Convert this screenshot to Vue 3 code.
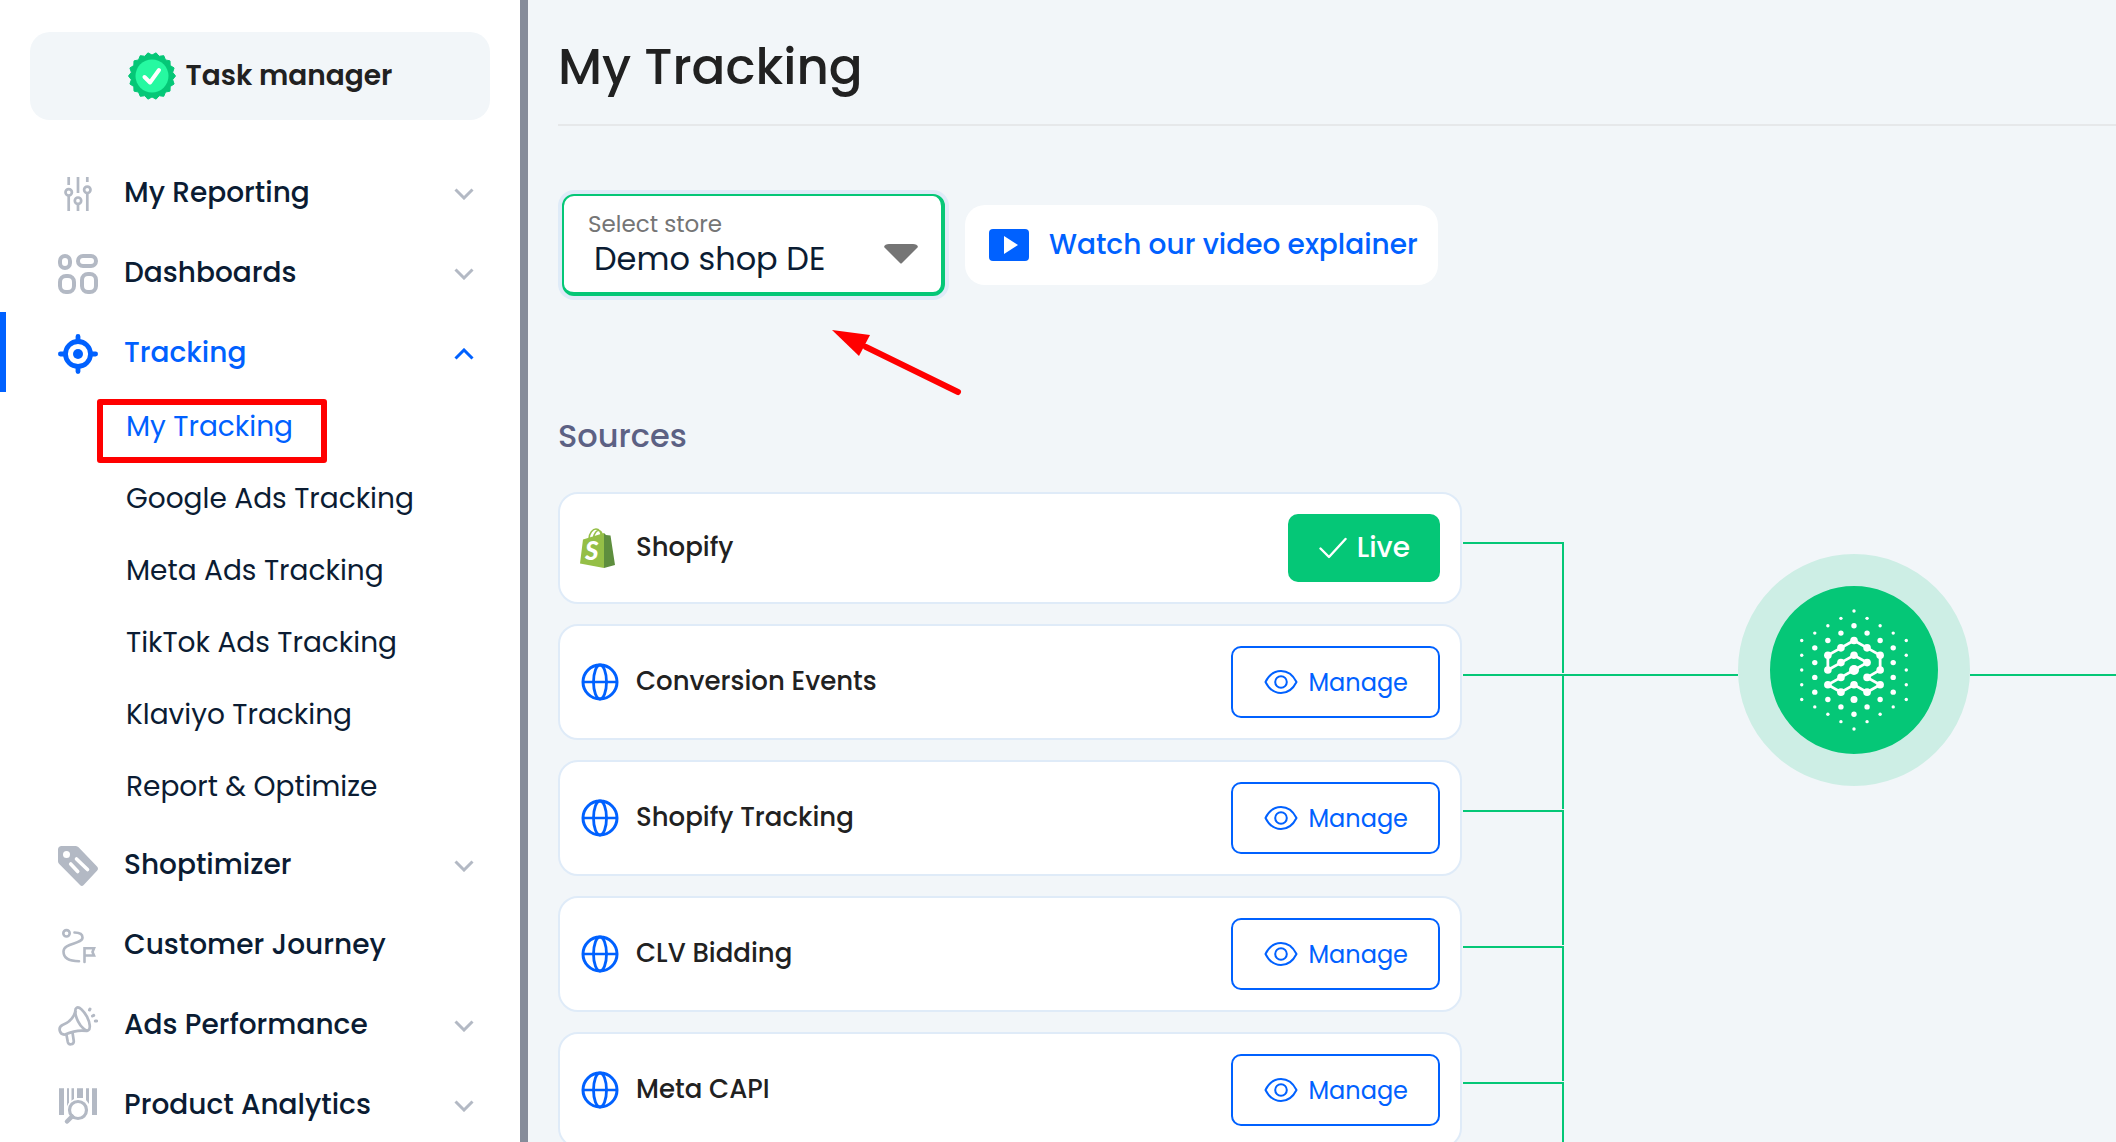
<script setup>
import { ref, computed } from 'vue'

const menu = [
  { id: 'reporting', label: 'My Reporting', children: [] },
  { id: 'dashboards', label: 'Dashboards', children: [] },
  {
    id: 'tracking',
    label: 'Tracking',
    children: [
      'My Tracking',
      'Google Ads Tracking',
      'Meta Ads Tracking',
      'TikTok Ads Tracking',
      'Klaviyo Tracking',
      'Report & Optimize'
    ]
  },
  { id: 'shoptimizer', label: 'Shoptimizer', children: [] },
  { id: 'journey', label: 'Customer Journey' },
  { id: 'ads', label: 'Ads Performance', children: [] },
  { id: 'analytics', label: 'Product Analytics', children: [] }
]

const sources = [
  { name: 'Shopify', live: true },
  { name: 'Conversion Events' },
  { name: 'Shopify Tracking' },
  { name: 'CLV Bidding' },
  { name: 'Meta CAPI' }
]

const openItem = ref('tracking')
const activePage = ref('My Tracking')
const store = ref('Demo shop DE')

const toggle = (item) => {
  openItem.value = openItem.value === item.id ? '' : item.id
}

// 18-pointed badge outline
const badgePoints = computed(() => {
  const points = []
  for (let i = 0; i < 36; i++) {
    const r = i % 2 ? 21 : 23.5
    const a = (i * Math.PI) / 18
    points.push(`${(24 + r * Math.cos(a)).toFixed(2)},${(24 + r * Math.sin(a)).toFixed(2)}`)
  }
  return points.join(' ')
})

// hub logo: dots on a hexagonal grid, [column, half row]
const px = (c) => 60 + c * 13.07
const py = (r) => 66 + r * 7.38
const loop = [
  [-2, 0], [-2, -2], [-1, -3], [0, -4], [1, -3], [2, -2], [2, 0], [1, 1], [2, 2],
  [1, 3], [0, 2], [-1, 3], [-2, 2], [-1, 1], [0, 0], [1, -1], [0, -2], [-1, -1]
]
const loopPoints = loop.map(([c, r]) => `${px(c)},${py(r)}`).join(' ')
const mirror = (list) => {
  const all = list.flatMap(([c, r]) => [[c, r], [-c, r], [c, -r], [-c, -r]])
  return [...new Set(all.map(([c, r]) => `${c + 0},${r + 0}`))].map((s) => s.split(',').map(Number))
}
const dots = [
  ...loop.map(([c, r]) => ({ c, r, size: c === 0 && r === 0 ? 5 : 3.8 })),
  ...mirror([[0, 8], [1, 7], [2, 6], [3, 5], [4, 4], [4, 2], [4, 0]]).map(([c, r]) => ({ c, r, size: 1.7 })),
  ...mirror([[0, 6], [1, 5], [2, 4], [3, 3], [3, 1]]).map(([c, r]) => ({ c, r, size: 2.7 })),
  { c: 0, r: 4, size: 3.5 }
]
</script>

<template>
  <div class="shell">
    <aside class="sidebar">
      <button type="button" class="task-manager">
        <svg width="48" height="48" viewBox="0 0 48 48" aria-hidden="true">
          <polygon :points="badgePoints" fill="#05c777" stroke="#05c777" stroke-linejoin="round" />
          <circle cx="24" cy="24" r="16.5" fill="#26f9a1" />
          <path d="M16.5 25l5.5 5.5L31 18" fill="none" stroke="#fff" stroke-width="4" stroke-linecap="round" stroke-linejoin="round" />
        </svg>
        Task manager
      </button>

      <nav class="menu">
        <div v-for="item in menu" :key="item.id">
          <button
            type="button"
            class="menu-item"
            :class="{ active: openItem === item.id }"
            @click="toggle(item)"
          >
            <svg class="menu-icon" width="40" height="40" viewBox="0 0 40 40" fill="none" stroke="currentColor" aria-hidden="true">
              <g v-if="item.id === 'reporting'" stroke-width="2.7">
                <path d="M10.7 3v8M10.7 22v15M20 3v16M20 30v7M29.3 3v5M29.3 19v18" />
                <circle cx="10.7" cy="18.3" r="3.2" />
                <circle cx="20" cy="26.7" r="3.2" />
                <circle cx="29.3" cy="15.8" r="3.2" />
              </g>
              <g v-else-if="item.id === 'dashboards'" stroke-width="4">
                <rect x="2" y="2" width="10" height="12" rx="5" />
                <rect x="20" y="2" width="18" height="10" rx="5" />
                <rect x="2" y="22" width="14" height="16" rx="6" />
                <rect x="24" y="20" width="14" height="18" rx="6" />
              </g>
              <g v-else-if="item.id === 'tracking'" stroke-width="4.8">
                <circle cx="20" cy="20" r="12.5" />
                <circle cx="20" cy="20" r="5" fill="currentColor" stroke="none" />
                <path d="M20 2.4V6M20 34v3.6M2.4 20H6M34 20h3.6" stroke-linecap="round" />
              </g>
              <g v-else-if="item.id === 'shoptimizer'">
                <path d="M3.5 0h13.5c1.5 0 2.8.5 3.8 1.5L39 20.5c1.3 1.4 1.3 3 0 4.3L25.7 39c-1.2 1.3-2.5 1.3-3.7 0L1.5 18.3C.5 17.3 0 16.3 0 15V3.5C0 1.5 1.5 0 3.5 0z" fill="currentColor" stroke="none" />
                <circle cx="8.5" cy="8.5" r="3.5" fill="#fff" stroke="none" />
                <path d="M18.5 13l11 10.5M12.7 18l7 7.5" stroke="#fff" stroke-width="3.6" stroke-linecap="round" />
              </g>
              <g v-else-if="item.id === 'journey'" stroke-width="2.6" stroke-linecap="round">
                <circle cx="8.5" cy="7.3" r="3.2" />
                <path d="M16.5 6.5c5 0 8 2 8 5 0 7-19 5-19 14 0 6.5 6 9.7 15.5 9.7" />
                <path d="M26.5 36V22.3H36l-1.5 3.6L36 29.5h-9.5" />
              </g>
              <g v-else-if="item.id === 'ads'" stroke-width="2.7" stroke-linecap="round">
                <ellipse cx="24.5" cy="13" rx="5" ry="12.7" transform="rotate(-27 24.5 13)" />
                <path d="M17.5 5.5C15.5 12 11 16.5 4.5 19c-5 2.5-3 10 2.5 9.5 8-3.5 14-5 22-3.5" />
                <path d="M8.5 29l1.3 7c.8 3.5 6 2.8 6-.8L14.5 26.5" />
                <path d="M31.5 4l.5-1M34.5 10l1.2-.6M37.3 15h1.3" stroke-width="3" />
              </g>
              <g v-else>
                <path d="M1 2.3h5V29H1zM9 2.3h2V19L9 21zM13.5 2.3H16V15l-2.5 1.5zM19 2.3h6V12h-6zM28 2.3h3V18l-3-4zM34 2.3h5V29h-5z" fill="currentColor" stroke="none" />
                <circle cx="20" cy="24" r="11.5" fill="#fff" stroke="none" />
                <circle cx="20" cy="24" r="8.5" stroke-width="3.2" />
                <path d="M14 30.5l-5 5" stroke-width="4.5" stroke-linecap="round" />
              </g>
            </svg>
            <span class="menu-label">{{ item.label }}</span>
            <svg v-if="item.children" class="chevron" width="20" height="12" viewBox="0 0 20 12" aria-hidden="true">
              <path :d="openItem === item.id ? 'M1.5 10.5L10 2l8.5 8.5' : 'M1.5 1.5L10 10l8.5-8.5'" fill="none" stroke="currentColor" stroke-width="3" />
            </svg>
          </button>
          <ul v-if="openItem === item.id && item.children" class="submenu">
            <li v-for="child in item.children" :key="child">
              <a href="#" :class="{ current: child === activePage }" @click.prevent="activePage = child">{{ child }}</a>
            </li>
          </ul>
        </div>
      </nav>
    </aside>

    <main class="content">
      <h1>My Tracking</h1>

      <div class="toolbar">
        <div class="store-select">
          <label for="store">Select store</label>
          <select id="store" v-model="store">
            <option>Demo shop DE</option>
          </select>
          <svg class="caret" width="34" height="20" viewBox="0 0 34 20" aria-hidden="true">
            <path d="M5 0h24c3 0 6 2 4.5 3.5L18 19q-1 1-2 0L.5 3.5C-1 2 2 0 5 0z" fill="#757575" />
          </svg>
        </div>
        <button type="button" class="video">
          <svg width="40" height="32" viewBox="0 0 40 32" aria-hidden="true">
            <rect width="40" height="32" rx="4" fill="#0061ff" />
            <path d="M15 7l14 9-14 9z" fill="#fff" />
          </svg>
          Watch our video explainer
        </button>
        <svg class="pointer" width="132" height="68" viewBox="0 0 132 68" aria-hidden="true">
          <path d="M34 17l92 45" stroke="#f00" stroke-width="6" stroke-linecap="round" />
          <path d="M0 0l38 5-11 21z" fill="#f00" />
        </svg>
      </div>

      <h2>Sources</h2>

      <div class="flow">
        <div class="sources">
          <div v-for="source in sources" :key="source.name" class="source-row">
            <div class="card">
              <svg v-if="source.live" width="40" height="40" viewBox="0 0 40 40" aria-hidden="true">
                <path d="M9 11C9 5 13 1 16 1s5 3 5.5 8M13.5 10C14 5 17 2 19 2.5s3 2.5 3.5 5" fill="none" stroke="#95bf47" stroke-width="1.5" />
                <path d="M3 11.5L24 5v35L0 35.5z" fill="#95bf47" />
                <path d="M24 5l2 2 4.5.5L35 37l-11 3z" fill="#5e8e3e" />
                <text x="5" y="32" class="bag-letter">S</text>
              </svg>
              <svg v-else width="40" height="40" viewBox="0 0 40 40" fill="none" stroke="#0061ff" aria-hidden="true">
                <circle cx="20" cy="20" r="17" stroke-width="3" />
                <ellipse cx="20" cy="20" rx="6.5" ry="17" stroke-width="2.8" />
                <path d="M3 20h34" stroke-width="2.3" />
              </svg>
              <span class="source-name">{{ source.name }}</span>
              <button v-if="source.live" type="button" class="btn live">
                <svg width="28" height="22" viewBox="0 0 28 22" aria-hidden="true">
                  <path d="M1.5 11.5L10 20 26.5 2" fill="none" stroke="#fff" stroke-width="2.4" stroke-linecap="round" stroke-linejoin="round" />
                </svg>
                Live
              </button>
              <button v-else type="button" class="btn manage">
                <svg width="34" height="26" viewBox="0 0 34 26" fill="none" stroke="currentColor" stroke-width="2" aria-hidden="true">
                  <path d="M1.5 13C5 6 10.5 2 17 2s12 4 15.5 11C29 20 23.5 24 17 24S5 20 1.5 13z" stroke-linejoin="round" />
                  <circle cx="17" cy="13" r="5.8" />
                </svg>
                Manage
              </button>
            </div>
            <span class="wire"></span>
          </div>
        </div>

        <div class="pipeline">
          <span class="line"></span>
          <div class="hub">
            <svg width="120" height="132" viewBox="0 0 120 132" aria-hidden="true">
              <polygon :points="loopPoints" fill="none" stroke="#fff" stroke-width="2.8" />
              <circle v-for="(dot, i) in dots" :key="i" :cx="px(dot.c)" :cy="py(dot.r)" :r="dot.size" fill="#fff" />
            </svg>
          </div>
          <span class="line grow"></span>
        </div>
      </div>
    </main>
  </div>
</template>

<style>
body {
  margin: 0;
  background: #f2f6f9;
}
</style>

<style scoped>
.shell {
  display: flex;
  height: 100vh;
  overflow: hidden;
  font-family: Poppins, Inter, sans-serif;
  color: #212121;
}

.shell * {
  box-sizing: border-box;
}

button {
  font-family: inherit;
  border: none;
  cursor: pointer;
}

svg {
  flex: none;
}

.sidebar {
  flex: none;
  width: 528px;
  border-right: 8px solid #868c9a;
  background: #fff;
  overflow: hidden;
}

.task-manager {
  display: flex;
  align-items: center;
  justify-content: center;
  gap: 10px;
  width: 460px;
  height: 88px;
  margin: 32px 30px;
  border-radius: 20px;
  background: #f2f6f9;
  color: #212121;
  font-size: 28px;
  font-weight: 600;
}

.menu-item {
  display: flex;
  align-items: center;
  width: 100%;
  height: 80px;
  padding: 4px 46px 0 58px;
  background: none;
  color: #b3b9c4;
  font-size: 28px;
  font-weight: 500;
  text-align: left;
}

.menu-label {
  flex: 1;
  margin-left: 26px;
  padding-bottom: 2px;
  color: #0b1c33;
}

.menu-item.active {
  padding-left: 52px;
  border-left: 6px solid #0061ff;
  color: #0061ff;
}

.menu-item.active .menu-label {
  color: inherit;
}

.submenu {
  margin: 0;
  padding: 0;
  list-style: none;
}

.submenu a {
  position: relative;
  display: block;
  padding: 0 0 2px 126px;
  color: #0b1c33;
  font-size: 28px;
  line-height: 70px;
  text-decoration: none;
}

.submenu a.current {
  color: #0061ff;
}

.submenu a.current::after {
  content: '';
  position: absolute;
  box-sizing: border-box;
  top: 7px;
  left: 97px;
  width: 230px;
  height: 64px;
  border: 6px solid #f00;
  border-radius: 3px;
}

.content {
  flex: 1;
  min-width: 0;
  padding-left: 30px;
}

h1 {
  margin: 0 0 64px;
  padding: 35px 0 25px;
  border-bottom: 2px solid #e6e8ea;
  font-size: 50px;
  font-weight: 500;
  line-height: 64px;
}

.toolbar {
  position: relative;
  display: flex;
  align-items: center;
  gap: 16px;
}

.store-select {
  position: relative;
  width: 383px;
  margin: 4px;
  padding: 13px 24px 10px;
  border: 2px solid #05c777;
  border-right-width: 4px;
  border-bottom-width: 4px;
  border-radius: 12px;
  background: #fff;
  box-shadow: 0 0 0 4px #dfebf8;
}

.store-select label {
  display: block;
  color: #757575;
  font-size: 23px;
  line-height: 30px;
}

.store-select select {
  display: block;
  width: 100%;
  height: 48px;
  margin-top: -5px;
  padding: 0 0 0 6px;
  appearance: none;
  border: none;
  outline: none;
  background: none;
  color: #0b1c33;
  font-family: inherit;
  font-size: 32px;
}

.caret {
  position: absolute;
  right: 23px;
  top: 48px;
  pointer-events: none;
}

.video {
  display: flex;
  align-items: center;
  gap: 20px;
  height: 80px;
  padding: 0 20px 0 24px;
  border-radius: 20px;
  background: #fff;
  color: #0061ff;
  font-size: 28px;
  font-weight: 500;
}

.pointer {
  position: absolute;
  left: 274px;
  top: 140px;
}

h2 {
  margin: 116px 0 36px;
  color: #5c6184;
  font-size: 32px;
  font-weight: 500;
  line-height: 40px;
}

.flow {
  display: flex;
  align-items: flex-start;
}

.sources {
  flex: 1;
}

.source-row {
  display: flex;
}

.card {
  display: flex;
  flex: 1;
  align-items: center;
  gap: 16px;
  margin-bottom: 20px;
  padding: 20px;
  border: 2px solid #dfebf8;
  border-radius: 20px;
  background: #fff;
}

.source-name {
  flex: 1;
  padding-bottom: 2px;
  font-size: 26px;
  font-weight: 500;
}

.btn {
  display: flex;
  align-items: center;
  gap: 10px;
  padding: 0 30px 0 31px;
  border-radius: 10px;
}

.live {
  height: 68px;
  background: #05c777;
  color: #fff;
  font-size: 28px;
  font-weight: 500;
}

.manage {
  height: 72px;
  border: 2px solid #0061ff;
  background: #fff;
  color: #0061ff;
  font-size: 24px;
}

/* joins a source to the one below it */
.wire {
  width: 101px;
  margin: 50px 0 -49px 1px;
  border-top: 2px solid #05c777;
  border-right: 2px solid #05c777;
}

.pipeline {
  display: flex;
  flex: none;
  align-items: flex-start;
  width: 552px;
  padding-top: 62px;
}

.line {
  width: 174px;
  height: 2px;
  margin-top: 120px;
  background: #05c777;
}

.line.grow {
  flex: 1;
}

.hub {
  display: flex;
  align-items: center;
  justify-content: center;
  width: 232px;
  height: 232px;
  border: 32px solid #cdeee5;
  border-radius: 50%;
  background: #05c777;
}

.bag-letter {
  fill: #fff;
  font-family: Lato, sans-serif;
  font-size: 26px;
  font-style: italic;
  font-weight: 900;
}
</style>
